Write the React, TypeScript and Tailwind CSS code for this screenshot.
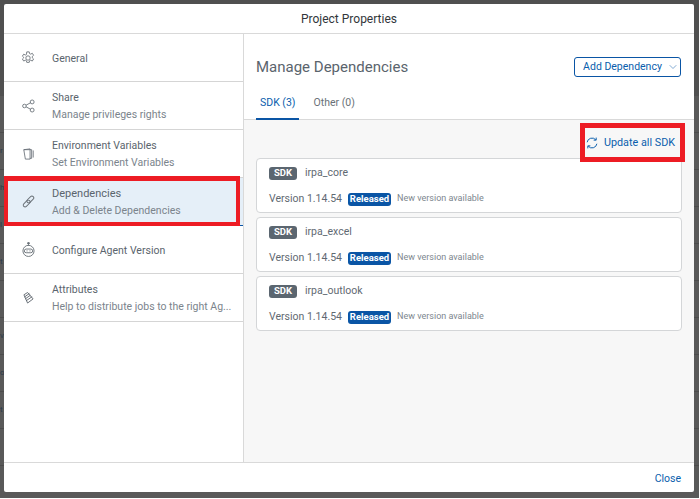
import React from "react";
import { ChevronDown } from "lucide-react";

const Gear = () => (
  <svg width="14" height="14" viewBox="0 0 16 16" fill="none" stroke="#6a7178" strokeWidth="1">
    <path d="M6.600 1h2.800l.4 2 1.300.6 1.800-1 1.500 2.300-1.500 1.300v1.600l1.500 1.300-1.500 2.400-1.800-1-1.300.6-.4 1.900H6.600l-.4-1.900-1.300-.6-1.800 1-1.500-2.400 1.500-1.300V7.200L1.600 5.900l1.500-2.300 1.800 1 1.300-.6z" />
    <circle cx="8" cy="8" r="2.500" />
  </svg>
);
const Share = () => (
  <svg width="13" height="14" viewBox="0 0 16 16" fill="none" stroke="#6a7178" strokeWidth="1.100">
    <circle cx="3" cy="8" r="2.200" />
    <circle cx="12.500" cy="3" r="2.400" />
    <circle cx="12.500" cy="13" r="2.400" />
    <path d="M5 7l5.500-3M5 9l5.500 3" />
  </svg>
);
const Pages = () => (
  <svg width="11" height="14" viewBox="0 0 14 16" fill="none" stroke="#6a7178" strokeWidth="1.100">
    <path d="M1 2.500L9 1.500v13H3z" />
    <path d="M1 2.500h10v11H9M13 3.500v9" />
  </svg>
);
const Link = () => (
  <svg width="13" height="13" viewBox="0 0 16 16" fill="none" stroke="#6a7178" strokeWidth="1.200">
    <rect x="8" y="0.500" width="4.500" height="10" rx="2.250" transform="rotate(45 10.250 5.500)" />
    <rect x="3.500" y="5.500" width="4.500" height="10" rx="2.250" transform="rotate(45 5.750 10.500)" />
  </svg>
);
const Robot = () => (
  <svg width="13" height="15" viewBox="0 0 14 16" fill="none" stroke="#6a7178" strokeWidth="1">
    <circle cx="7" cy="1.300" r="1" fill="#6a7178" />
    <path d="M7 2.500v1.500" />
    <circle cx="7" cy="9.500" r="6" />
    <rect x="2.500" y="7.500" width="9" height="4" rx="2" />
    <path d="M5 9.500h.8M8.200 9.500H9" strokeWidth="1.300" />
  </svg>
);
const Tag = () => (
  <svg width="11" height="14" viewBox="0 0 12 15" fill="none" stroke="#5f676e" strokeWidth="1">
    <path d="M1 4L5 1.500M1.500 6.500L7 2.500M2.500 8.500L8 4.500M3.500 10.500L10 6M5 13L11 8.500" />
    <path d="M1 4l4 9M5 1.500l6 7" />
  </svg>
);
const Refresh = () => (
  <svg width="12" height="12" viewBox="0 0 16 16" fill="none" stroke="#0a5ead" strokeWidth="1.300">
    <path d="M1.500 7A6.600 6.600 0 0 1 13 3.700" />
    <path d="M14.500 9A6.600 6.600 0 0 1 3 12.300" />
    <path d="M13.600 .8v3.400h-3.400" />
    <path d="M2.400 15.200v-3.400h3.400" />
  </svg>
);

type Item = { icon: React.ReactNode; title: string; sub?: string; selected?: boolean };
const items: Item[] = [
  { icon: <Gear />, title: "General" },
  { icon: <Share />, title: "Share", sub: "Manage privileges rights" },
  { icon: <Pages />, title: "Environment Variables", sub: "Set Environment Variables" },
  { icon: <Link />, title: "Dependencies", sub: "Add & Delete Dependencies", selected: true },
  { icon: <Robot />, title: "Configure Agent Version" },
  { icon: <Tag />, title: "Attributes", sub: "Help to distribute jobs to the right Ag..." },
];

const backdrop = ["", "r", "h", "l", "t", "", "v", "o", "t", "", ""];

function Card({ name }: { name: string }) {
  return (
    <div className="h-[55px] rounded-[4px] border border-[#d4d6d8] bg-white pl-3 pt-[6px]">
      <div className="flex h-4 items-center gap-2">
        <span className="flex h-[13px] w-7 items-center justify-center rounded-[3px] bg-[#5b6670] text-[9.500px] font-bold text-white">SDK</span>
        <span className="text-[10.500px] text-[#5f6972]">{name}</span>
      </div>
      <div className="mt-[10px] flex h-4 items-center">
        <span className="text-[10.500px] text-[#5f6972]">Version 1.14.54</span>
        <span className="ml-[6px] flex h-[13px] w-[43px] items-center justify-center rounded-[3px] bg-[#0a55a5] text-[9.500px] font-bold text-white">Released</span>
        <span className="ml-[6px] text-[9px] text-[#7d868e]">New version available</span>
      </div>
    </div>
  );
}

export default function App() {
  return (
    <div className="relative h-[498px] w-[699px] overflow-hidden bg-[#555555] [font-family:'Roboto','Liberation_Sans',sans-serif]">
      <div className="h-[96px] bg-[#505050]" />
      {backdrop.map((c, i) => (
        <div key={i} className="h-[37px] border-b border-[#4c4c4c] bg-[#595959] text-[8px] leading-[36px] text-[#2b3a4a]">
          {c}
        </div>
      ))}
      <div className="absolute left-1 top-1 flex h-[488px] w-[690px] flex-col rounded-[2px] bg-white">
        <header className="flex h-[30px] shrink-0 items-center justify-center border-b border-[#d9d9d9] text-[12px] text-[#32363a]">
          Project Properties
        </header>
        <div className="flex min-h-0 flex-1">
          <nav className="w-[240px] shrink-0 border-r border-[#d9d9d9]">
            {items.map((it) => (
              <div
                key={it.title}
                className={`flex h-[48px] items-center border-b ${it.selected ? "border-[#0a55a5] bg-[#e5eff8]" : "border-[#d5d5d5] bg-white"}`}
              >
                <div className="flex w-[48px] shrink-0 justify-center">{it.icon}</div>
                <div className={`min-w-0 whitespace-nowrap ${it.sub ? "" : "pt-[2px]"}`}>
                  <div className={`${it.title === "Dependencies" ? "text-[11px]" : "text-[10.500px]"} leading-[17px] text-[#5a646d]`}>{it.title}</div>
                  {it.sub && <div className="text-[10.500px] leading-[17px] text-[#7b848c]">{it.sub}</div>}
                </div>
              </div>
            ))}
          </nav>
          <main className="flex min-w-0 flex-1 flex-col">
            <div className="h-[86px] shrink-0 border-b border-[#d9d9d9] px-3">
              <div className="flex h-[53px] items-center justify-between pr-[1px] pt-[13px]">
                <h1 className="text-[15px] font-normal text-[#5a646d]">Manage Dependencies</h1>
                <button className="flex h-[20px] w-[107px] items-center justify-center gap-[5px] whitespace-nowrap rounded-[3px] border border-[#0a55a5] pl-[7px] text-[10.500px] text-[#0a5ead]">
                  Add Dependency
                  <ChevronDown size={12} strokeWidth={1.500} color="#5a8fc4" />
                </button>
              </div>
              <div className="flex gap-[14px] text-[10.500px]">
                <div className="h-[33px] border-b-2 border-[#0a55a5] px-1 pt-[8px] leading-[16px] text-[#0a5ead]">SDK (3)</div>
                <div className="pt-[8px] leading-[16px] text-[#6a7178]">Other (0)</div>
              </div>
            </div>
            <div className="flex-1 bg-[#f7f7f7] px-3">
              <div className="flex h-[38px] items-center justify-end gap-[6px] pr-[7px] pt-[8px] text-[10.800px] text-[#0a5ead]">
                <Refresh />
                Update all SDK
              </div>
              <div className="flex flex-col gap-1">
                <Card name="irpa_core" />
                <Card name="irpa_excel" />
                <Card name="irpa_outlook" />
              </div>
            </div>
          </main>
        </div>
        <footer className="flex h-[30px] shrink-0 items-center justify-end border-t border-[#d9d9d9] pr-[13px] pt-[2px] text-[10.500px] text-[#0a5ead]">
          Close
        </footer>
        <div className="pointer-events-none absolute left-0 top-[172px] h-[50px] w-[236px] border-[4px] border-t-[5px] border-[#ed1c24]" />
        <div className="pointer-events-none absolute left-[576px] top-[119px] h-[39px] w-[105px] border-[5px] border-[#ed1c24]" />
      </div>
    </div>
  );
}
